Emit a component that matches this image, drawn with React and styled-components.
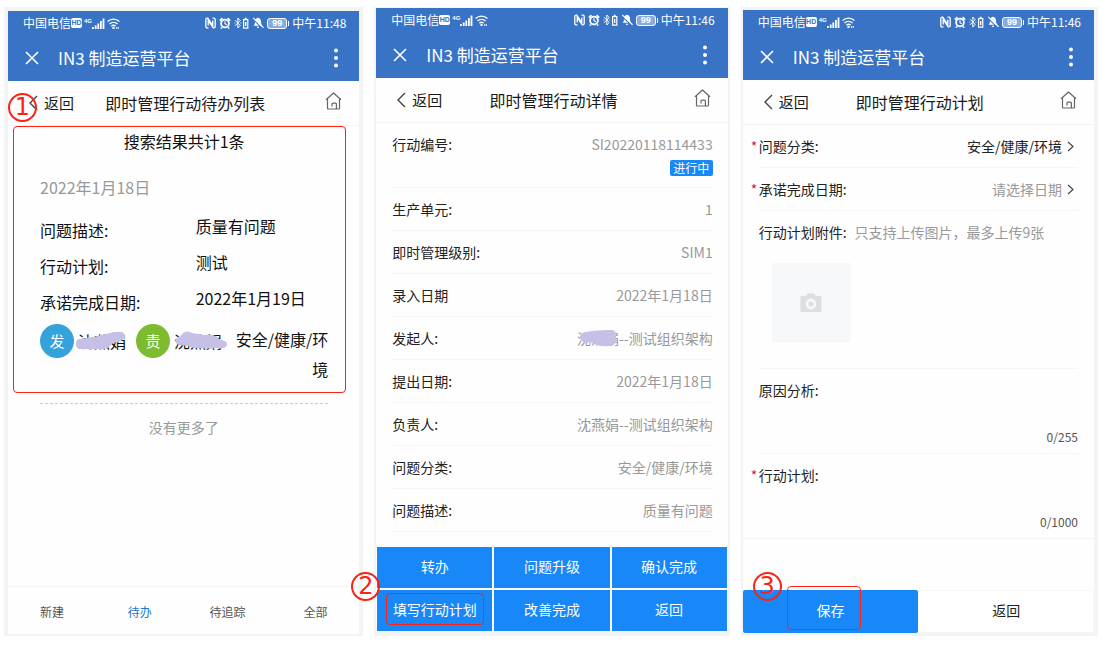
import { useState } from "react";
import styled, { createGlobalStyle, css } from "styled-components";

const GlobalStyle = createGlobalStyle`
  *, *::before, *::after {
    box-sizing: border-box;
  }

  body {
    margin: 0;
    background: #fff;
    color: #222;
    font-family: "Noto Sans CJK SC", sans-serif;
    font-size: 14px;
    line-height: 20px;
  }

  button, input, textarea {
    margin: 0;
    padding: 0;
    border: 0;
    background: none;
    color: inherit;
    font: inherit;
  }

  button {
    cursor: pointer;
  }

  svg {
    display: block;
    flex: none;
  }
`;

const RED = "#fa2314";
const BLUE = "#1887f7";

const Board = styled.main`
  display: flex;
  gap: 11px;
  min-height: 100vh;
  padding: 7px 4px 13px;
`;

const Phone = styled.section`
  position: relative;
  flex: 1;
  min-width: 0;
  display: flex;
  flex-direction: column;
  padding: ${({ $frame }) => $frame};
  background: #f4f4f4;
`;

const Screen = styled.div`
  flex: 1;
  display: flex;
  flex-direction: column;
  background: #fefefe;
`;

const TopBar = styled.header`
  background: #3873c5;
  color: #fff;
`;

const StatusBar = styled.div`
  display: flex;
  justify-content: space-between;
  align-items: center;
  height: 24px;
  padding: 0 13px 0 15px;
  font-size: 12px;
  line-height: 16px;
`;

const StatusGroup = styled.div`
  display: flex;
  align-items: center;
  gap: ${({ $gap }) => $gap};
`;

const HdMark = styled.span`
  width: 11px;
  height: 10px;
  border-radius: 2px;
  background: #fff;
  color: #3873c5;
  font: bold 7px/10px "Liberation Sans", sans-serif;
  text-align: center;
`;

const Signal = styled.span`
  display: flex;
  align-items: flex-end;
`;

const Generation = styled.span`
  align-self: flex-start;
  font: bold 6px/6px "Liberation Sans", sans-serif;
`;

const Battery = styled.span`
  position: relative;
  width: 20px;
  height: 11px;
  margin-right: 2px;
  border: 1px solid #fff;
  border-radius: 3px;
  background: #86abe0;
  font: bold 9px/9px "Liberation Sans", sans-serif;
  text-align: center;

  &::after {
    content: "";
    position: absolute;
    top: 2px;
    right: -3px;
    width: 1px;
    height: 5px;
    background: #fff;
  }
`;

const AppBar = styled.div`
  display: flex;
  align-items: center;
  height: 46px;
  padding: 0 20px 0 17px;
`;

const AppName = styled.h1`
  flex: 1;
  margin: 0;
  padding-left: 19px;
  font-size: 17px;
  font-weight: 400;
`;

const NavBar = styled.nav`
  display: grid;
  grid-template-columns: 1fr auto 1fr;
  align-items: center;
  height: 45px;
  padding: 0 17px 0 20px;
  border-bottom: 1px solid #f3f3f3;
  color: #1a1a1a;
  font-size: 16px;
`;

const BackLink = styled.a`
  display: flex;
  align-items: center;
  gap: 6px;
  color: inherit;
  font-size: 15px;
  text-decoration: none;
`;

const NavTitle = styled.h2`
  margin: 0;
  font-size: inherit;
  font-weight: 400;
`;

const HomeLink = styled.a`
  justify-self: end;
  padding-bottom: 4px;
  color: #666;
`;

const Step = styled.span`
  position: absolute;
  top: ${({ $top }) => $top};
  left: ${({ $left }) => $left};
  width: 29px;
  height: 29px;
  border: 2px solid ${RED};
  border-radius: 50%;
  color: ${RED};
  font: 24px/25px "DejaVu Sans", sans-serif;
  text-align: center;
`;

/* pending list */

const Result = styled.article`
  margin: 0 13px 0 5px;
  padding: 4px 17px 8px 26px;
  border: 1px solid ${RED};
  border-radius: 4px;
  color: #111;
  font-size: 16px;
`;

const ResultCount = styled.p`
  margin: 0;
  text-align: center;
`;

const ResultDate = styled.p`
  margin: 26px 0 15px;
  color: #999;
`;

const Field = styled.div`
  display: grid;
  grid-template-columns: 54% 1fr;
  align-items: start;
  line-height: 36px;
`;

const FieldValue = styled.span`
  line-height: 28px;
`;

const People = styled.div`
  display: flex;
  align-items: flex-start;
  padding-top: 4px;
`;

const Person = styled.div`
  display: flex;
  align-items: center;
  gap: 4px;
  margin-right: 10px;
`;

const Avatar = styled.span`
  width: 34px;
  height: 34px;
  border-radius: 50%;
  background: ${({ $color }) => $color};
  color: #fff;
  font-size: 15px;
  line-height: 34px;
  text-align: center;
`;

const Hidden = styled.span`
  position: relative;
  white-space: nowrap;

  svg {
    position: absolute;
    top: ${({ $top }) => $top};
    left: ${({ $left }) => $left};
  }
`;

const Category = styled.span`
  flex: 1;
  line-height: 30px;
  text-align: right;
  word-break: break-all;
`;

const Divider = styled.hr`
  width: auto;
  margin: 10px 31px 0 32px;
  border: 0;
  border-top: 1px dashed #ccc;
`;

const NoMore = styled.p`
  margin: 13px 0 0;
  color: #999;
  text-align: center;
`;

const Tabs = styled.div`
  display: flex;
  height: 48px;
  margin-top: auto;
  border-top: 1px solid #f3f3f3;
`;

const Tab = styled.button`
  flex: 1;
  padding-top: 3px;
  color: ${({ $active }) => ($active ? "#1976d2" : "#555")};
  font-size: 12px;
`;

/* details */

const Rows = styled.div`
  padding: 0 15px 0 16px;
`;

const Row = styled.div`
  display: flex;
  justify-content: space-between;
  padding: 11px 0;
  border-bottom: 1px solid #f5f5f5;
`;

const RowValue = styled.span`
  color: #999;
  text-align: right;
`;

const Tag = styled.span`
  display: block;
  width: 43px;
  height: 16px;
  margin: 6px 0 0 auto;
  border-radius: 2px;
  background: ${BLUE};
  color: #fff;
  font-size: 12px;
  line-height: 16px;
  text-align: center;
`;

const Actions = styled.div`
  display: grid;
  grid-template-columns: repeat(3, 1fr);
  gap: 2px;
  margin-top: auto;
  padding: 0 1px;
`;

const Action = styled.button`
  display: flex;
  align-items: center;
  justify-content: center;
  height: 41px;
  padding-bottom: 3px;
  background: ${BLUE};
  color: #fff;
`;

const Marked = styled.span`
  padding: 5px 6px;
  border: 1px solid ${RED};
  border-radius: 4px;
`;

/* plan form */

const Form = styled.form`
  flex: 1;
  display: flex;
  flex-direction: column;
`;

const FormBody = styled.div`
  padding: 0 16px;
  border-bottom: 1px solid #f3f3f3;
`;

const FormItem = styled.div`
  padding: ${({ $padding = "11px 0" }) => $padding};

  & + & {
    border-top: 1px solid #f5f5f5;
  }
`;

const Line = styled.div`
  display: flex;
  gap: ${({ $gap = "0" }) => $gap};
`;

const Label = styled.label`
  position: relative;

  ${({ $required }) =>
    $required &&
    css`
      &::before {
        content: "*";
        position: absolute;
        left: -8px;
        color: #e0143c;
      }
    `}
`;

const Picker = styled.button`
  display: flex;
  align-items: center;
  gap: 5px;
  margin-left: auto;
  padding-right: 4px;
  color: ${({ $empty }) => ($empty ? "#999" : "#222")};

  svg {
    color: #444;
  }
`;

const Hint = styled.span`
  color: #999;
`;

const Upload = styled.label`
  position: relative;
  display: grid;
  place-items: center;
  width: 79px;
  height: 79px;
  margin: 21px 0 15px 13px;
  background: #f7f8fa;
  color: #dcdee0;

  input {
    position: absolute;
    inset: 0;
    width: 100%;
    opacity: 0;
  }
`;

const TextArea = styled.textarea`
  display: block;
  width: 100%;
  height: 27px;
  outline: 0;
  resize: none;
`;

const Counter = styled.div`
  color: #555;
  font-size: 12px;
  text-align: right;
`;

const FormActions = styled.div`
  display: grid;
  grid-template-columns: 1fr 1fr;
  margin-top: auto;
`;

const FormButton = styled.button`
  position: relative;
  height: 43px;
  padding-bottom: 3px;
  border-radius: 2px;

  ${({ $primary }) =>
    $primary
      ? css`
          background: ${BLUE};
          color: #fff;
        `
      : css`
          border: 1px solid #f6f6f6;
          background: #fff;
        `}
`;

const SaveMark = styled.span`
  position: absolute;
  top: -4px;
  left: 44px;
  width: 74px;
  height: 44px;
  border: 1px solid ${RED};
  border-radius: 4px;
`;

const BarsIcon = () => (
  <svg width="13" height="11" viewBox="0 0 13 11" fill="#fff">
    <path d="M0 9h1.8v2H0zM2.8 7.5h1.8V11H2.8zM5.4 5.5h1.8V11H5.4zM8 3h1.8v8H8zM10.6 0.5h1.8V11h-1.8z" />
  </svg>
);

const WifiIcon = () => (
  <svg width="13" height="11" viewBox="0 0 13 11" fill="none" stroke="#fff" strokeWidth="1.4">
    <path d="M0.6 3.6C4 0.3 9 0.3 12.4 3.6M2.5 6c2.3-2.2 5.7-2.2 8 0M4.4 8.2c1.3-1.1 2.9-1.1 4.2 0" />
    <circle cx="6.5" cy="10" r="0.5" />
    <path d="M9 10h3" strokeDasharray="1.2 0.6" />
  </svg>
);

const NfcIcon = () => (
  <svg width="11" height="12" viewBox="0 0 11 12" fill="none" stroke="#fff">
    <path
      d="M3.5 10.8H2.2Q0.8 10.8 0.8 9.4V2.6Q0.8 1.2 2.2 1.2h0.6l5 7.4V3.5M7.5 1.2h1.3q1.4 0 1.4 1.4v6.8q0 1.4-1.4 1.4h-0.6l-5-7.4v5"
      strokeWidth="1.3"
    />
  </svg>
);

const AlarmIcon = () => (
  <svg width="12" height="12" viewBox="0 0 12 12" fill="none" stroke="#fff">
    <circle cx="6" cy="6.5" r="3.9" strokeWidth="1.8" />
    <path d="M6 4.2v2.5l1.8 1" strokeWidth="1.1" />
    <path d="M0.8 3.7 3.4 1.2M11.2 3.7 8.6 1.2M2.8 10.6l-1 1M9.2 10.6l1 1" strokeWidth="1.6" />
  </svg>
);

const BluetoothIcon = () => (
  <svg width="15" height="12" viewBox="0 0 15 12" fill="none" stroke="#fff">
    <path d="M1 3.2 6.2 8.4 3.8 11V1l2.4 2.6L1 8.8M0.4 6h0.9M6.4 6h0.9" />
    <path d="M9.6 2.7h4.2v8.4H9.6zM10.8 1.3h1.8" strokeWidth="1.2" />
    <path d="M11.7 5v4" strokeWidth="1.4" />
  </svg>
);

const MuteIcon = () => (
  <svg width="12" height="12" viewBox="0 0 12 12">
    <path
      d="M6 0.8c2.2 0.5 3 2 3 3.8 0 2.4 0.5 3.2 1.4 4.2H1.6C2.5 7.8 3 7 3 4.6c0-1.8 0.8-3.3 3-3.8zM4.8 9.7h2.4a1.2 1.2 0 0 1-2.4 0z"
      fill="#fff"
    />
    <path d="M0.5 1.8 10.8 11.6" stroke="#3873c5" strokeWidth="1.2" />
    <path d="M1.2 0.9 11.5 10.7" stroke="#fff" strokeWidth="1.2" />
  </svg>
);

const CloseIcon = () => (
  <svg width="14" height="14" viewBox="0 0 14 14" fill="none" stroke="#fff" strokeWidth="1.6">
    <path d="M1 1l12 12M13 1 1 13" />
  </svg>
);

const MoreIcon = () => (
  <svg width="6" height="20" viewBox="0 0 6 20" fill="#fff">
    <circle cx="3" cy="2.4" r="2" />
    <circle cx="3" cy="10" r="2" />
    <circle cx="3" cy="17.6" r="2" />
  </svg>
);

const BackIcon = () => (
  <svg width="10" height="16" viewBox="0 0 10 16" fill="none" stroke="#444" strokeWidth="1.4">
    <path d="M9 1 2 8l7 7" />
  </svg>
);

const ArrowIcon = () => (
  <svg width="7" height="11" viewBox="0 0 7 11" fill="none" stroke="currentColor" strokeWidth="1.2">
    <path d="M1 1l5 4.5-5 4.5" />
  </svg>
);

const HomeIcon = () => (
  <svg
    width="17"
    height="18"
    viewBox="0 0 17 18"
    fill="none"
    stroke="currentColor"
    strokeWidth="1.2"
    strokeLinejoin="round"
  >
    <path d="M1 7.8 8.5 1 16 7.8M2.500 6.600v9.700q0 0.700 0.700 0.700h8.200v-4.900q0-1-1-1H8q-1 0-1 1V14.500M11.400 17h2.400q0.700 0 0.700-0.700V6.600" />
  </svg>
);

const CameraIcon = () => (
  <svg width="22" height="20" viewBox="0 0 22 20">
    <path
      d="M1 3h5l2-2.500h6L16 3h5q0.500 0 0.500 0.500v15q0 0.500-0.500 0.500H1q-0.500 0-0.500-0.500v-15Q0.500 3 1 3z"
      fill="currentColor"
    />
    <circle cx="11" cy="11" r="4" fill="none" stroke="#f7f8fa" strokeWidth="2.8" />
  </svg>
);

const Scribble = ({ width, height, d }) => (
  <svg width={width} height={height} viewBox={`0 0 ${width} ${height}`} fill="#c6bfe6" aria-hidden="true">
    <path d={d} />
  </svg>
);

const Header = ({ time, title }) => (
  <>
    <TopBar>
      <StatusBar>
        <StatusGroup $gap="2px">
          <StatusGroup $gap="0">
            中国电信
            <HdMark>HD</HdMark>
          </StatusGroup>
          <Signal>
            <Generation>4G</Generation>
            <BarsIcon />
          </Signal>
          <WifiIcon />
        </StatusGroup>
        <StatusGroup $gap="3px">
          <NfcIcon />
          <AlarmIcon />
          <BluetoothIcon />
          <MuteIcon />
          <Battery>99</Battery>
          <span>中午{time}</span>
        </StatusGroup>
      </StatusBar>
      <AppBar>
        <button type="button" aria-label="关闭">
          <CloseIcon />
        </button>
        <AppName>IN3 制造运营平台</AppName>
        <button type="button" aria-label="更多">
          <MoreIcon />
        </button>
      </AppBar>
    </TopBar>
    <NavBar>
      <BackLink href="#back">
        <BackIcon />
        返回
      </BackLink>
      <NavTitle>{title}</NavTitle>
      <HomeLink href="#home" aria-label="首页">
        <HomeIcon />
      </HomeLink>
    </NavBar>
  </>
);

const tabs = ["新建", "待办", "待追踪", "全部"];

const summary = [
  ["问题描述:", "质量有问题"],
  ["行动计划:", "测试"],
  ["承诺完成日期:", "2022年1月19日"],
];

const PendingList = () => {
  const [active, setActive] = useState("待办");

  return (
    <Phone $frame="4px 4px 2px">
      <Screen>
        <Header time="11:48" title="即时管理行动待办列表" />
        <Result>
          <ResultCount>搜索结果共计1条</ResultCount>
          <ResultDate>2022年1月18日</ResultDate>
          {summary.map(([label, value]) => (
            <Field key={label}>
              <span>{label}</span>
              <FieldValue>{value}</FieldValue>
            </Field>
          ))}
          <People>
            <Person>
              <Avatar $color="#34a3dc">发</Avatar>
              <Hidden $top="0" $left="-2px">
                沈燕娟
                <Scribble
                  width={50}
                  height={20}
                  d="M3 8Q10 7 17 6L30 3Q39 0 46 1q5 3 3 6-3 4-12 5l-4 4q-4 3-10 2H4q-5-1-4-6 0-3 3-4z"
                />
              </Hidden>
            </Person>
            <Person>
              <Avatar $color="#7dbb2f">责</Avatar>
              <Hidden $top="0" $left="1px">
                沈燕娟
                <Scribble
                  width={53}
                  height={20}
                  d="M8 2q4-3 9 0l12 2q12-1 15 4 9 2 8 6-2 4-9 3-10 1-17 0-7 1-13-2l-9-1q-5-2-3-6 4-2 7-6z"
                />
              </Hidden>
            </Person>
            <Category>安全/健康/环境</Category>
          </People>
        </Result>
        <Divider />
        <NoMore>没有更多了</NoMore>
        <Tabs>
          {tabs.map((tab) => (
            <Tab
              key={tab}
              type="button"
              $active={tab === active}
              onClick={() => setActive(tab)}
            >
              {tab}
            </Tab>
          ))}
        </Tabs>
      </Screen>
      <Step $top="86px" $left="4px">
        1
      </Step>
    </Phone>
  );
};

const Details = () => (
  <Phone $frame="1px 2px 5px">
    <Screen>
      <Header time="11:46" title="即时管理行动详情" />
      <Rows>
        <Row>
          <span>行动编号:</span>
          <RowValue>
            SI20220118114433
            <Tag>进行中</Tag>
          </RowValue>
        </Row>
        <Row>
          <span>生产单元:</span>
          <RowValue>1</RowValue>
        </Row>
        <Row>
          <span>即时管理级别:</span>
          <RowValue>SIM1</RowValue>
        </Row>
        <Row>
          <span>录入日期</span>
          <RowValue>2022年1月18日</RowValue>
        </Row>
        <Row>
          <span>发起人:</span>
          <RowValue>
            <Hidden $top="2px" $left="3px">
              沈燕娟
              <Scribble
                width={37}
                height={17}
                d="M5 2Q16 0 29 0q7-1 7 5v6q-1 5-7 5-9 1-16-3L4 12q-5-2-4-6 1-3 5-4z"
              />
            </Hidden>
            --测试组织架构
          </RowValue>
        </Row>
        <Row>
          <span>提出日期:</span>
          <RowValue>2022年1月18日</RowValue>
        </Row>
        <Row>
          <span>负责人:</span>
          <RowValue>沈燕娟--测试组织架构</RowValue>
        </Row>
        <Row>
          <span>问题分类:</span>
          <RowValue>安全/健康/环境</RowValue>
        </Row>
        <Row>
          <span>问题描述:</span>
          <RowValue>质量有问题</RowValue>
        </Row>
      </Rows>
      <Actions>
        <Action type="button">转办</Action>
        <Action type="button">问题升级</Action>
        <Action type="button">确认完成</Action>
        <Action type="button">
          <Marked>填写行动计划</Marked>
        </Action>
        <Action type="button">改善完成</Action>
        <Action type="button">返回</Action>
      </Actions>
    </Screen>
    <Step $top="565px" $left="-23px">
      2
    </Step>
  </Phone>
);

const LongText = ({ id, label, max, required }) => {
  const [text, setText] = useState("");

  return (
    <FormItem $padding="11px 0 6px">
      <Label htmlFor={id} $required={required}>
        {label}
      </Label>
      <TextArea
        id={id}
        maxLength={max}
        value={text}
        onChange={(e) => setText(e.target.value)}
      />
      <Counter>
        {text.length}/{max}
      </Counter>
    </FormItem>
  );
};

const Plan = () => (
  <Phone $frame="3px 4px 3px 2px">
    <Screen>
      <Header time="11:46" title="即时管理行动计划" />
      <Form onSubmit={(e) => e.preventDefault()}>
        <FormBody>
          <FormItem>
            <Line>
              <Label htmlFor="category" $required>
                问题分类:
              </Label>
              <Picker id="category" type="button">
                安全/健康/环境
                <ArrowIcon />
              </Picker>
            </Line>
          </FormItem>
          <FormItem>
            <Line>
              <Label htmlFor="due" $required>
                承诺完成日期:
              </Label>
              <Picker id="due" type="button" $empty>
                请选择日期
                <ArrowIcon />
              </Picker>
            </Line>
          </FormItem>
          <FormItem>
            <Line $gap="8px">
              <Label htmlFor="files">行动计划附件:</Label>
              <Hint>只支持上传图片，最多上传9张</Hint>
            </Line>
            <Upload>
              <input id="files" type="file" accept="image/*" multiple />
              <CameraIcon />
            </Upload>
          </FormItem>
          <LongText id="cause" label="原因分析:" max={255} />
          <LongText id="plan" label="行动计划:" max={1000} required />
        </FormBody>
        <FormActions>
          <FormButton type="submit" $primary>
            保存
            <SaveMark />
          </FormButton>
          <FormButton type="button">返回</FormButton>
        </FormActions>
      </Form>
    </Screen>
    <Step $top="565px" $left="12px">
      3
    </Step>
  </Phone>
);

const App = () => (
  <>
    <GlobalStyle />
    <Board>
      <PendingList />
      <Details />
      <Plan />
    </Board>
  </>
);

export default App;
